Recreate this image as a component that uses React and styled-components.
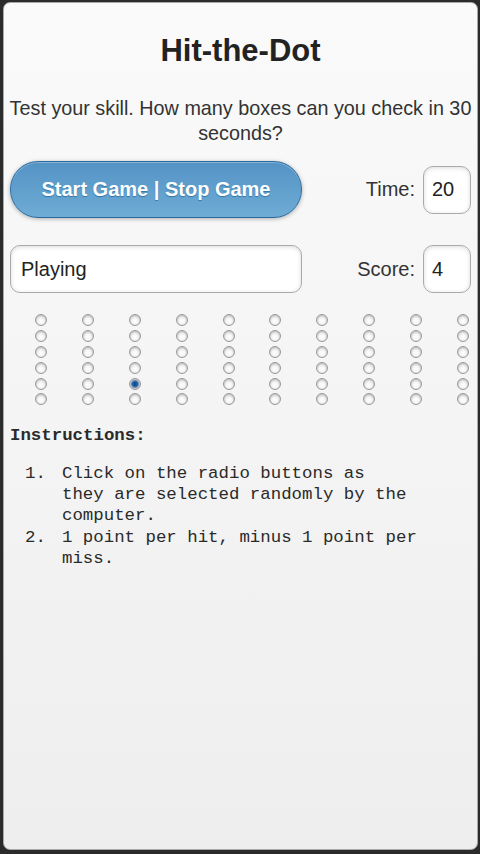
import React from 'react';
import styled, { createGlobalStyle } from 'styled-components';

const GlobalStyle = createGlobalStyle`
  html, body {
    margin: 0;
    padding: 0;
    background: #2b2b2b;
  }
  body {
    font-family: "Liberation Sans", Arial, sans-serif;
    color: #333;
  }
`;

const Frame = styled.div`
  padding: 2px 2px 4px 3px;
  height: 854px;
  box-sizing: border-box;
`;

const Panel = styled.div`
  height: 100%;
  box-sizing: border-box;
  border: 1px solid #a9a9a9;
  border-radius: 7px;
  background: linear-gradient(#fafafa, #eeeeee);
  padding: 0 6px 0 6px;
  overflow: hidden;
`;

const Title = styled.h1`
  margin: 0;
  padding-top: 30px;
  font-size: 31px;
  line-height: 36px;
  font-weight: bold;
  color: #222;
  text-align: center;
`;

const Intro = styled.p`
  margin: 27px -6px 0;
  font-size: 19.8px;
  line-height: 25px;
  text-align: center;
  color: #333;
`;

const Row = styled.div`
  display: flex;
  align-items: center;
  justify-content: space-between;
  margin-top: ${(p) => p.top}px;
`;

const BigButton = styled.button`
  width: 292px;
  height: 57px;
  border: 1px solid #2a6a9d;
  border-radius: 28px;
  background: linear-gradient(#5393c5, #6facd5);
  box-shadow: 0 1px 4px rgba(0, 0, 0, 0.3), inset 0 1px 0 rgba(255, 255, 255, 0.3);
  color: #fff;
  font-family: "Liberation Sans", Arial, sans-serif;
  font-size: 20px;
  font-weight: bold;
  text-shadow: 0 1px 1px #3373a5;
  padding: 0;
`;

const StatusBox = styled.div`
  width: 292px;
  height: 48px;
  box-sizing: border-box;
  border: 1px solid #aaa;
  border-radius: 10px;
  background: #fff;
  box-shadow: inset 0 1px 4px rgba(0, 0, 0, 0.15);
  font-size: 20px;
  display: flex;
  align-items: center;
  padding-left: 10px;
  color: #222;
`;

const Stat = styled.div`
  display: flex;
  align-items: center;
  gap: 8px;
`;

const StatLabel = styled.span`
  font-size: 20px;
  color: #333;
`;

const StatBox = styled.div`
  width: 48px;
  height: 48px;
  box-sizing: border-box;
  border: 1px solid #aaa;
  border-radius: 10px;
  background: #fff;
  box-shadow: inset 0 1px 4px rgba(0, 0, 0, 0.15);
  font-size: 20px;
  display: flex;
  align-items: center;
  padding-left: 8px;
  color: #222;
`;

const Board = styled.div`
  display: grid;
  grid-template-columns: repeat(10, 12px);
  grid-auto-flow: column;
  grid-template-rows: repeat(6, 12px);
  column-gap: 34.9px;
  row-gap: 3.9px;
  margin-top: 21px;
  padding-left: 25px;
`;

const Dot = styled.input`
  appearance: none;
  margin: 0;
  width: 12px;
  height: 12px;
  border-radius: 50%;
  box-sizing: border-box;
  border: 1px solid #9a9a9a;
  background: ${(p) =>
    p.checked
      ? 'radial-gradient(circle, #0b3f7a 0, #1c5fa8 30%, #3a78b8 45%, #bdbdbd 60%, #efefef 100%)'
      : 'radial-gradient(circle at 50% 60%, #ffffff 0, #f4f4f4 40%, #c8c8c8 70%, #e6e6e6 100%)'};
`;

const Instructions = styled.div`
  font-family: "Liberation Mono", "Courier New", monospace;
  font-size: 17.4px;
  line-height: 21.3px;
  color: #2a2a2a;
  margin-top: 20px;
`;

const InstrHead = styled.div`
  font-weight: bold;
`;

const Steps = styled.ol`
  list-style: none;
  margin: 16px 0 0;
  padding: 0;
`;

const Step = styled.li`
  display: flex;
`;

const StepNum = styled.span`
  width: 52px;
  flex: none;
  box-sizing: border-box;
  padding-left: 15px;
`;

const StepText = styled.span`
  white-space: nowrap;
`;

const ROWS = 6;
const COLS = 10;
const active = { col: 2, row: 4 };

export default function App() {
  const dots = [];
  for (let c = 0; c < COLS; c++) {
    for (let r = 0; r < ROWS; r++) {
      const on = c === active.col && r === active.row;
      dots.push(
        <Dot key={`${c}-${r}`} type="radio" name={`col${c}`} checked={on} readOnly />
      );
    }
  }

  return (
    <Frame>
      <GlobalStyle />
      <Panel>
        <Title>Hit-the-Dot</Title>
        <Intro>Test your skill. How many boxes can you check in 30 seconds?</Intro>

        <Row top={15}>
          <BigButton>Start Game | Stop Game</BigButton>
          <Stat>
            <StatLabel>Time:</StatLabel>
            <StatBox>20</StatBox>
          </Stat>
        </Row>

        <Row top={27}>
          <StatusBox>Playing</StatusBox>
          <Stat>
            <StatLabel>Score:</StatLabel>
            <StatBox>4</StatBox>
          </Stat>
        </Row>

        <Board>{dots}</Board>

        <Instructions>
          <InstrHead>Instructions:</InstrHead>
          <Steps>
            <Step>
              <StepNum>1.</StepNum>
              <StepText>
                Click on the radio buttons as
                <br />
                they are selected randomly by the
                <br />
                computer.
              </StepText>
            </Step>
            <Step>
              <StepNum>2.</StepNum>
              <StepText>
                1 point per hit, minus 1 point per
                <br />
                miss.
              </StepText>
            </Step>
          </Steps>
        </Instructions>
      </Panel>
    </Frame>
  );
}
